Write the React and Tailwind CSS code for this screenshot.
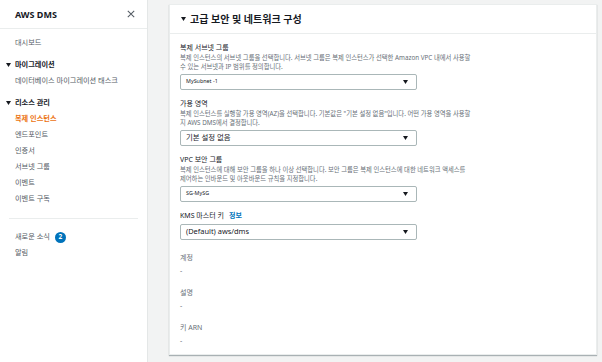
import React from "react";

const FONT = { fontFamily: '"Noto Sans", "Noto Sans CJK KR", sans-serif' };

function Tri({ className = "" }) {
  return (
    <svg width="5" height="4" viewBox="0 0 10 8" className={className}>
      <path d="M0 0 L10 0 L5 8 Z" fill="currentColor" />
    </svg>
  );
}

function Select({ children, big }) {
  return (
    <div className="mt-[3px] h-[16px] w-[237px] border border-[#aab7b8] rounded-[2px] bg-white flex items-center justify-between pl-[5px] pr-[8px]">
      <span className={big ? "text-[7.4px] text-[#16191f] leading-none" : "text-[5.4px] text-[#16191f] leading-none"}>{children}</span>
      <Tri className="text-[#16191f]" />
    </div>
  );
}

function Field({ label, desc, children }) {
  return (
    <div className="flex flex-col">
      <div className="h-[11px] flex items-center text-[7px] text-[#16191f] leading-none">{label}</div>
      {desc && (
        <div className="mt-[1px] text-[6.3px] leading-[8.5px] text-[#687078] whitespace-nowrap">
          {desc[0]}
          <br />
          {desc[1]}
        </div>
      )}
      {children}
    </div>
  );
}

function RO({ label }) {
  return (
    <div className="flex flex-col mt-[12px]">
      <div className="h-[10px] flex items-center text-[7px] text-[#687078] leading-none">{label}</div>
      <div className="h-[10px] mt-[3px] flex items-center text-[7px] text-[#687078] leading-none">-</div>
    </div>
  );
}

function NavItem({ children, active }) {
  return (
    <div
      className={
        "h-[16px] flex items-center pl-[15px] text-[7.2px] leading-none " +
        (active ? "text-[#ec7211] font-bold" : "text-[#545b64]")
      }
    >
      {children}
    </div>
  );
}

function Section({ children }) {
  return (
    <div className="h-[16px] flex items-center text-[7.2px] leading-none text-[#16191f] font-semibold mt-[6px]">
      <span className="w-[15px] flex justify-center pl-[1px]">
        <Tri />
      </span>
      {children}
    </div>
  );
}

export default function App() {
  return (
    <div style={FONT} className="w-[602px] h-[362px] flex bg-[#f2f3f3] overflow-hidden">
      <aside className="w-[148px] h-full bg-white border-r border-[#e4e7e7] flex flex-col shrink-0">
        <div className="h-[29px] border-b border-[#eaeded] flex items-center justify-between pl-[15px] pr-[12px]">
          <span className="text-[9px] font-bold text-[#16191f] leading-none">AWS DMS</span>
          <svg width="8" height="8" viewBox="0 0 10 10">
            <path d="M1 1 L9 9 M9 1 L1 9" stroke="#545b64" strokeWidth="1.3" />
          </svg>
        </div>
        <div className="pt-[6px] flex flex-col">
          <NavItem>대시보드</NavItem>
          <Section>마이그레이션</Section>
          <NavItem>데이터베이스 마이그레이션 태스크</NavItem>
          <Section>리소스 관리</Section>
          <NavItem active>복제 인스턴스</NavItem>
          <NavItem>엔드포인트</NavItem>
          <NavItem>인증서</NavItem>
          <NavItem>서브넷 그룹</NavItem>
          <NavItem>이벤트</NavItem>
          <NavItem>이벤트 구독</NavItem>
          <div className="mt-[11px] mx-[9px] border-t border-[#eaeded]" />
          <div className="mt-[10px] h-[16px] flex items-center pl-[15px] text-[7.2px] leading-none text-[#545b64] gap-[5px]">
            새로운 소식
            <span className="w-[11px] h-[11px] rounded-full bg-[#0073bb] text-white text-[6.5px] font-bold flex items-center justify-center">2</span>
          </div>
          <NavItem>알림</NavItem>
        </div>
      </aside>
      <main className="flex-1 pl-[21px] pt-[4px] pr-[5px]">
        <div className="h-[351px] bg-white border border-[#eaeded] shadow-[0_1px_1px_0_rgba(0,28,36,0.3)] flex flex-col">
          <div className="h-[29px] border-b border-[#eaeded] flex items-center pl-[11px] gap-[4px]">
            <Tri className="text-[#16191f]" />
            <span className="text-[10px] font-bold text-[#16191f] leading-none">고급 보안 및 네트워크 구성</span>
          </div>
          <div className="px-[10px] pt-[8px] flex flex-col gap-[8px]">
            <Field
              label="복제 서브넷 그룹"
              desc={[
                "복제 인스턴스의 서브넷 그룹을 선택합니다. 서브넷 그룹은 복제 인스턴스가 선택한 Amazon VPC 내에서 사용할",
                "수 있는 서브넷과 IP 범위를 정의합니다.",
              ]}
            >
              <Select>MySubnet -1</Select>
            </Field>
            <Field
              label="가용 영역"
              desc={[
                "복제 인스턴스를 실행할 가용 영역(AZ)을 선택합니다. 기본값은 \"기본 설정 없음\"입니다. 어떤 가용 영역을 사용할",
                "지 AWS DMS에서 결정합니다.",
              ]}
            >
              <Select big>기본 설정 없음</Select>
            </Field>
            <Field
              label="VPC 보안 그룹"
              desc={[
                "복제 인스턴스에 대해 보안 그룹을 하나 이상 선택합니다. 보안 그룹은 복제 인스턴스에 대한 네트워크 액세스를",
                "제어하는 인바운드 및 아웃바운드 규칙을 지정합니다.",
              ]}
            >
              <Select>SG-MySG</Select>
            </Field>
            <Field
              label={
                <>
                  KMS 마스터 키
                  <span className="ml-[5px] text-[#0073bb] font-bold">정보</span>
                </>
              }
            >
              <Select big>(Default) aws/dms</Select>
            </Field>
          </div>
          <div className="px-[10px] flex flex-col">
            <RO label="계정" />
            <RO label="설명" />
            <RO label="키 ARN" />
          </div>
        </div>
      </main>
    </div>
  );
}
